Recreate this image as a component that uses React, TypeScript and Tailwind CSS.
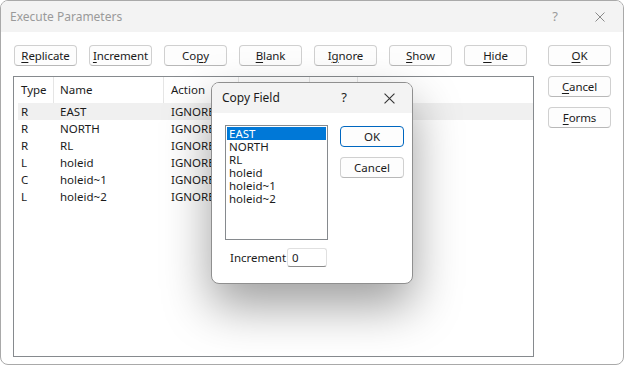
import React from 'react';

const font = { fontFamily: '"Noto Sans", "Open Sans", sans-serif' };

const rows = [
  { type: 'R', name: 'EAST' },
  { type: 'R', name: 'NORTH' },
  { type: 'R', name: 'RL' },
  { type: 'L', name: 'holeid' },
  { type: 'C', name: 'holeid~1' },
  { type: 'L', name: 'holeid~2' },
];

const fields = ['EAST', 'NORTH', 'RL', 'holeid', 'holeid~1', 'holeid~2'];

// label split around the mnemonic letter
const Btn = ({ pre, key1, post }: { pre: string; key1: string; post: string }) => (
  <button className="w-[63px] h-[21px] flex items-center justify-center rounded-[4px] border border-[#d0d0d0] border-b-[#b8b8b8] bg-[#fdfdfd] text-[11.5px] tracking-[-0.1px] text-[#1b1b1b] leading-none">
    {pre}
    <span className="underline underline-offset-2">{key1}</span>
    {post}
  </button>
);

const CloseIcon = ({ size = 10, color = '#8a8a8a' }: { size?: number; color?: string }) => (
  <svg width={size} height={size} viewBox="0 0 10 10">
    <path d="M0.5 0.5 L9.5 9.5 M9.5 0.5 L0.5 9.5" stroke={color} strokeWidth="1" />
  </svg>
);

export default function App() {
  return (
    <div style={font} className="relative w-[624px] h-[365px] overflow-hidden bg-white border border-[#a9a9a9] rounded-[8px]">
      {/* Title bar */}
      <div className="h-[31px] bg-[#f3f3f3] flex items-center pl-[9px] pr-[18px] text-[12px] text-[#9a9a9a]">
        <span>Execute Parameters</span>
        <span className="ml-auto w-[10px] text-center text-[13px]">?</span>
        <span className="ml-[35px]">
          <CloseIcon />
        </span>
      </div>

      {/* Body */}
      <div className="flex pl-[12px] pt-[13px]">
        <div className="flex flex-col">
          <div className="flex gap-[12px] pl-[1px]">
            <Btn pre="" key1="R" post="eplicate" />
            <Btn pre="" key1="I" post="ncrement" />
            <Btn pre="Co" key1="p" post="y" />
            <Btn pre="" key1="B" post="lank" />
            <Btn pre="I" key1="g" post="nore" />
            <Btn pre="" key1="S" post="how" />
            <Btn pre="" key1="H" post="ide" />
          </div>

          {/* List view */}
          <div className="mt-[10px] w-[521px] h-[281px] border border-[#868a8e] text-[11.5px] text-[#1b1b1b]">
            <div className="flex h-[26px] items-center">
              <div className="w-[40px] h-full pl-[7px] flex items-center border-r border-[#e5e5e5]">Type</div>
              <div className="w-[110px] h-full pl-[6px] flex items-center border-r border-[#e5e5e5]">Name</div>
              <div className="w-[75px] h-full pl-[7px] flex items-center border-r border-[#e5e5e5]">Action</div>
              <div className="w-[71px] h-full border-r border-[#e5e5e5]"></div>
              <div className="w-[48px] h-full border-r border-[#e5e5e5]"></div>
            </div>
            <div className="flex flex-col">
              {rows.map((r, i) => (
                <div
                  key={i}
                  className={`flex h-[17px] items-center ml-[4px] ${i === 0 ? 'bg-[#f0f0f0]' : ''}`}
                >
                  <div className="w-[36px] pl-[3px]">{r.type}</div>
                  <div className="w-[110px] pl-[6px]">{r.name}</div>
                  <div className="pl-[7px]">IGNORE</div>
                </div>
              ))}
            </div>
          </div>
        </div>

        <div className="ml-[14px] flex flex-col gap-[10px]">
          <Btn pre="" key1="O" post="K" />
          <Btn pre="" key1="C" post="ancel" />
          <Btn pre="" key1="F" post="orms" />
        </div>
      </div>

      {/* Copy Field dialog */}
      <div className="absolute left-[210px] top-[81px] w-[202px] h-[202px] rounded-[8px] border border-[#8f8f8f] bg-white overflow-hidden shadow-[0_22px_48px_rgba(0,0,0,0.38)] text-[11.5px] text-[#1b1b1b]">
        <div className="h-[30px] bg-[#f3f3f3] flex items-center pl-[10px] pr-[17px] text-[12px]">
          <span>Copy Field</span>
          <span className="ml-auto w-[10px] text-center text-[13px]">?</span>
          <span className="ml-[35px]">
            <CloseIcon size={11} color="#333" />
          </span>
        </div>
        <div className="flex pl-[13px] pt-[12px]">
          <div className="w-[103px] h-[115px] border border-[#868a8e] p-[1px]">
            {fields.map((f, i) => (
              <div
                key={f}
                className={`h-[13px] leading-[13px] pl-[2px] ${i === 0 ? 'bg-[#0078d7] text-white' : ''}`}
              >
                {f}
              </div>
            ))}
          </div>
          <div className="ml-[12px] mt-[1px] flex flex-col gap-[10px]">
            <button className="w-[64px] h-[21px] rounded-[4px] border border-[#0067c0] bg-[#fdfdfd] leading-none">OK</button>
            <button className="w-[64px] h-[21px] rounded-[4px] border border-[#d0d0d0] border-b-[#b8b8b8] bg-[#fdfdfd] leading-none">Cancel</button>
          </div>
        </div>
        <div className="flex items-center mt-[8px] pl-[18px]">
          <span className="w-[57px]">Increment</span>
          <div className="w-[40px] h-[19px] border border-[#e0e0e0] border-b-[#8a8a8a] rounded-[3px] flex items-center pl-[4px]">0</div>
        </div>
      </div>
    </div>
  );
}
